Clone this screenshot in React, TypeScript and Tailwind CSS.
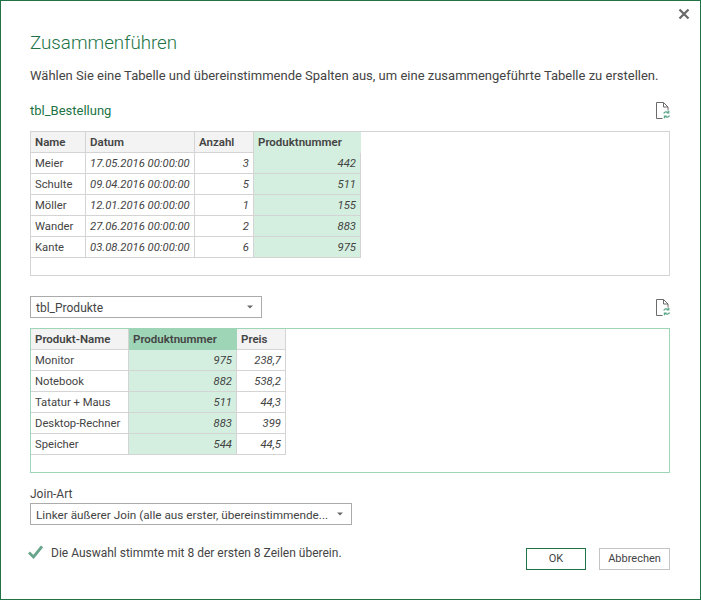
import React from "react";

function RefreshDoc() {
  return (
    <svg width="14" height="17" viewBox="0 0 14 17" className="block">
      <path d="M0.5 16.5V0.5H7.5L12 5V8.5M7.5 0.5V5H12M0.5 16.5H6.5" fill="none" stroke="#6b6b6b" strokeWidth="1" />
      <path d="M7.7 11.4C8.4 9.9 10.6 9.3 12.3 10.5M12.8 8.7V11H10.5" fill="none" stroke="#5aa888" strokeWidth="1.2" />
      <path d="M13.5 13.6C12.8 15.1 10.6 15.7 8.9 14.5M8.4 16.3V14H10.7" fill="none" stroke="#5aa888" strokeWidth="1.2" />
    </svg>
  );
}

function Caret() {
  return (
    <svg width="6" height="4" viewBox="0 0 6 4" className="block shrink-0">
      <path d="M0 0.5H6L3 3.5Z" fill="#6a6a6a" />
    </svg>
  );
}

type Col = { w: string; title: string; right?: boolean; sel?: boolean; head?: string; italic?: boolean };

function Table({ cols, rows }: { cols: Col[]; rows: string[][] }) {
  return (
    <div className="flex flex-col items-start">
      <div className="flex h-[21px]">
        {cols.map((c, i) => (
          <div
            key={i}
            className={`${c.w} ${c.head ?? "bg-[#f3f3f3]"} border-[#d4d4d4] pl-[4px] font-semibold text-[11.5px] leading-[20px] text-[#444444] whitespace-nowrap overflow-hidden ${c.sel ? "" : "border-r border-b"}`}
          >
            {c.title}
          </div>
        ))}
      </div>
      {rows.map((r, ri) => (
        <div key={ri} className="flex h-[21px]">
          {r.map((v, ci) => {
            const c = cols[ci];
            return (
              <div
                key={ci}
                className={`${c.w} ${c.sel ? "bg-[#d4efdf]" : ""} border-r border-b border-[#d4d4d4] text-[11.25px] leading-[21px] text-[#444444] whitespace-nowrap overflow-hidden ${c.right ? "text-right pr-[4px]" : "pl-[4px]"} ${c.right || c.italic ? "italic" : ""}`}
              >
                {v}
              </div>
            );
          })}
        </div>
      ))}
    </div>
  );
}

export default function App() {
  return (
    <div className="font-['Roboto','Open_Sans',sans-serif] w-[701px] h-[600px] bg-white border border-[#217346] text-[#444444] flex flex-col pl-[29px] pr-[30px]">
      <div className="flex justify-end h-[29px] pt-[7px] -mr-[20px]">
        <svg width="12" height="12" viewBox="0 0 12 12" className="block">
          <path d="M1.5 1.5L10.5 10.5M10.5 1.5L1.5 10.5" stroke="#6a6a6a" strokeWidth="2.2" fill="none" />
        </svg>
      </div>
      <h1 className="text-[18.75px] font-light leading-[26px] text-[#217346]">Zusammenführen</h1>
      <p className="mt-[11px] text-[13px] leading-[18px] whitespace-nowrap">
        Wählen Sie eine Tabelle und übereinstimmende Spalten aus, um eine zusammengeführte Tabelle zu erstellen.
      </p>
      <div className="mt-[12px] h-[27px] flex items-center justify-between">
        <span className="text-[13px] leading-[18px] pt-[1px] text-[#217346]">tbl_Bestellung</span>
        <RefreshDoc />
      </div>
      <div className="mt-[7px] h-[145px] border border-[#d4d4d4]">
        <Table
          cols={[
            { w: "w-[55px]", title: "Name" },
            { w: "w-[109px]", title: "Datum", italic: true },
            { w: "w-[59px]", title: "Anzahl", right: true },
            { w: "w-[107px]", title: "Produktnummer", right: true, sel: true, head: "bg-[#d4efdf]" },
          ]}
          rows={[
            ["Meier", "17.05.2016 00:00:00", "3", "442"],
            ["Schulte", "09.04.2016 00:00:00", "5", "511"],
            ["Möller", "12.01.2016 00:00:00", "1", "155"],
            ["Wander", "27.06.2016 00:00:00", "2", "883"],
            ["Kante", "03.08.2016 00:00:00", "6", "975"],
          ]}
        />
      </div>
      <div className="mt-[20px] h-[22px] flex items-center justify-between">
        <div className="w-[232px] h-[22px] border border-[#ababab] flex items-center justify-between pl-[5px] pr-[8px]">
          <span className="text-[12px] leading-[20px] pt-[1px]">tbl_Produkte</span>
          <Caret />
        </div>
        <RefreshDoc />
      </div>
      <div className="mt-[10px] h-[145px] border border-[#9fd5b7]">
        <Table
          cols={[
            { w: "w-[98px]", title: "Produkt-Name" },
            { w: "w-[108px]", title: "Produktnummer", right: true, sel: true, head: "bg-[#9fd5b7]" },
            { w: "w-[49px]", title: "Preis", right: true },
          ]}
          rows={[
            ["Monitor", "975", "238,7"],
            ["Notebook", "882", "538,2"],
            ["Tatatur + Maus", "511", "44,3"],
            ["Desktop-Rechner", "883", "399"],
            ["Speicher", "544", "44,5"],
          ]}
        />
      </div>
      <div className="mt-[13px] text-[12px] leading-[17px]">Join-Art</div>
      <div className="w-[322px] h-[22px] border border-[#ababab] flex items-center justify-between pl-[5px] pr-[8px]">
        <span className="text-[11.75px] leading-[20px] pt-[1px] whitespace-nowrap">Linker äußerer Join (alle aus erster, übereinstimmende...</span>
        <Caret />
      </div>
      <div className="mt-[23px] flex items-start justify-between">
        <div className="flex items-center h-[18px] -mt-[4px] gap-[8px] -ml-[2px]">
          <svg width="15" height="14" viewBox="0 0 15 14" className="block -mt-[2px]">
            <path d="M1 7.5L5.5 12L14 1.5" fill="none" stroke="#68a58c" strokeWidth="2.8" />
          </svg>
          <span className="text-[12px] whitespace-nowrap">Die Auswahl stimmte mit 8 der ersten 8 Zeilen überein.</span>
        </div>
        <div className="flex gap-[13px]">
          <button className="w-[60px] h-[22px] border border-[#217346] pt-[1px] text-[11px] text-center text-[#444444]">OK</button>
          <button className="w-[71px] h-[22px] border border-[#c4c4c4] pt-[1px] text-[11px] text-center text-[#444444]">Abbrechen</button>
        </div>
      </div>
    </div>
  );
}
